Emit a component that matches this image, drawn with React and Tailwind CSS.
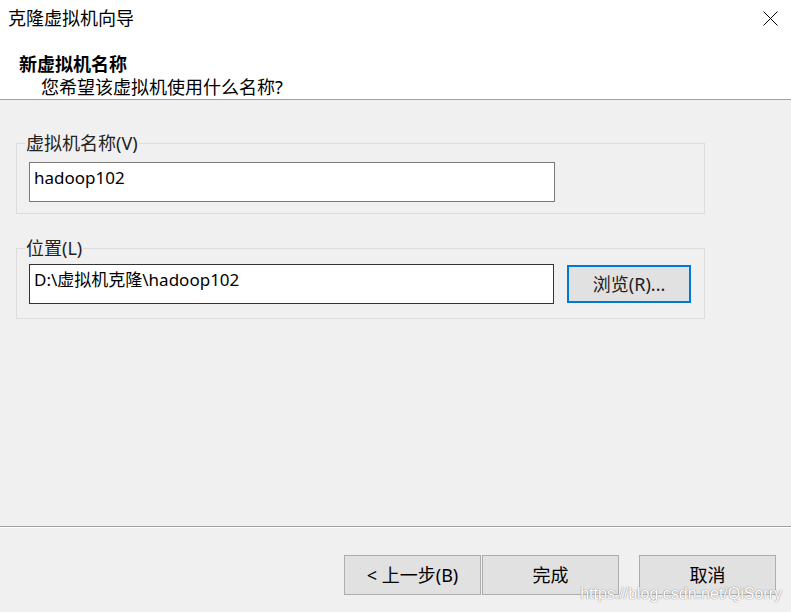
import React from 'react'

const FONT = "font-['Noto_Sans','Noto_Sans_CJK_SC',sans-serif]"

function GroupBox({ label, children, tight }) {
  return (
    <fieldset
      className={`border border-[#dcdcdc] w-[689px] pl-[12px] pr-[13px] min-w-0 ${tight ? 'pt-[6px] pb-[14px]' : 'pt-[9px] pb-[11px]'}`}
    >
      <legend className="-ml-[4px] px-[1px] leading-[20px] text-[18px] text-[#222]">{label}</legend>
      <div className="flex items-center gap-[13px]">{children}</div>
    </fieldset>
  )
}

function TextBox({ value, dark }) {
  return (
    <div
      className={`w-[526px] h-[40px] bg-white border ${dark ? 'border-[#333333]' : 'border-[#7a7a7a]'} pl-[4px] pt-[3px] leading-[24px] text-[17px] text-black whitespace-nowrap`}
    >
      {value}
    </div>
  )
}

function WizButton({ children }) {
  return (
    <button className="w-[137px] h-[40px] bg-[#e1e1e1] border border-[#adadad] text-[18px] text-black leading-[24px] flex items-center justify-center">
      {children}
    </button>
  )
}

export default function App() {
  return (
    <div className={`w-[791px] h-[612px] flex flex-col bg-[#f0f0f0] relative overflow-hidden ${FONT}`}>
      {/* header */}
      <div className="h-[100px] shrink-0 bg-white border-b border-[#a0a0a0] relative">
        <div className="pl-[8px] pt-[6px] leading-[24px] text-[18px] text-black">克隆虚拟机向导</div>
        <svg className="absolute right-[13px] top-[11px]" width="15" height="15" viewBox="0 0 15 15">
          <path d="M0.5 0.5 L14.5 14.5 M14.5 0.5 L0.5 14.5" stroke="#000" strokeWidth="1" fill="none" />
        </svg>
        <div className="pl-[19px] mt-[22px] leading-[24px] text-[18px] font-bold text-black">新虚拟机名称</div>
        <div className="pl-[41px] leading-[22px] text-[18px] text-black">您希望该虚拟机使用什么名称?</div>
      </div>

      {/* body */}
      <div className="flex-1 px-[16px] pt-[33px] flex flex-col gap-[24px]">
        <GroupBox label="虚拟机名称(V)">
          <TextBox value="hadoop102" />
        </GroupBox>
        <GroupBox label="位置(L)" tight>
          <TextBox value="D:\虚拟机克隆\hadoop102" dark />
          <button className="w-[124px] h-[38px] bg-[#e1e1e1] border-2 border-[#0078d7] text-[18px] text-[#222] flex items-center justify-center">
            浏览(R)...
          </button>
        </GroupBox>
      </div>

      {/* footer */}
      <div className="h-[86px] shrink-0 border-t border-[#a0a0a0] shadow-[inset_0_1px_0_#ffffff] pt-[28px] pr-[15px] flex justify-end">
        <div className="flex gap-[1px]">
          <WizButton>&lt; 上一步(B)</WizButton>
          <WizButton>完成</WizButton>
        </div>
        <div className="ml-[20px]">
          <WizButton>取消</WizButton>
        </div>
      </div>

      <div className="absolute right-[9px] bottom-[8px] text-[16px] leading-[20px] text-white font-['Liberation_Sans',sans-serif] [text-shadow:0_0_1px_#8a8a8a,0_0_1px_#8a8a8a]">
        https://blog.csdn.net/QiSorry
      </div>
    </div>
  )
}
